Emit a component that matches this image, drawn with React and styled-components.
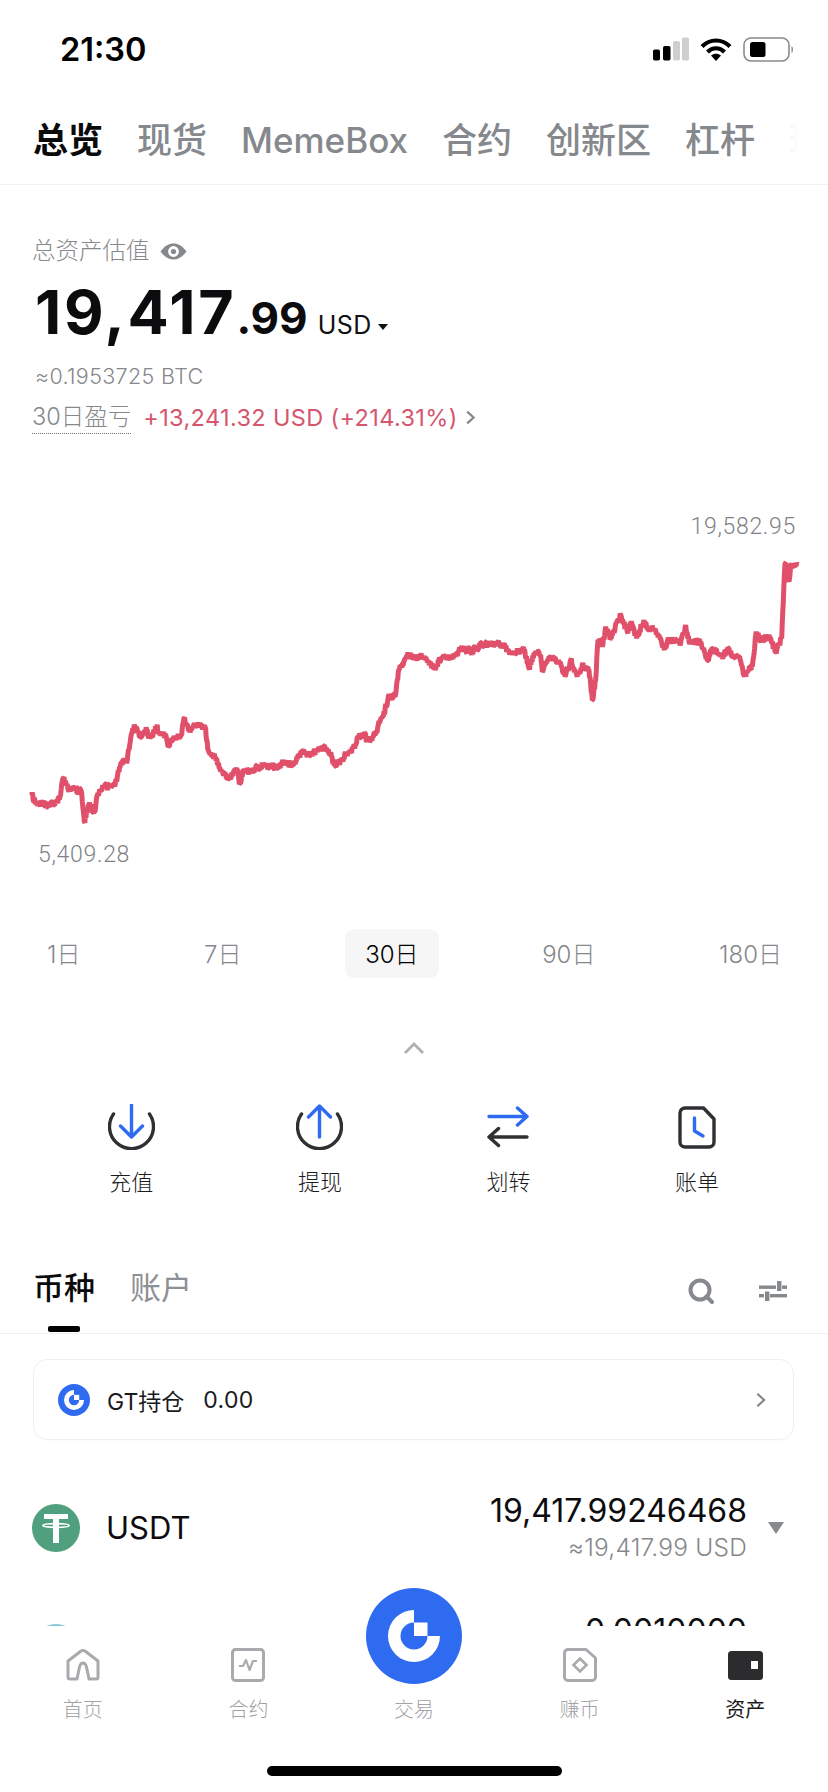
import React from 'react'
import styled, { createGlobalStyle } from 'styled-components'

const GlobalStyle = createGlobalStyle`
  html, body { margin: 0; padding: 0; background: #fff; }
  body { font-family: Inter, "Noto Sans CJK SC", sans-serif; color: #0d0d0f; }
`

const Page = styled.div`
  position: relative; width: 828px; height: 1792px; overflow: hidden; background: #fff;
`
const StatusBar = styled.div`
  height: 98px; display: flex; align-items: center; justify-content: space-between; padding: 0 34px 0 60px; box-sizing: border-box;
`
const Time = styled.span` padding-top: 2px; font: 600 32.5px/1 Inter, sans-serif; color: #000; `
const StatusIcons = styled.div` display: flex; align-items: center; gap: 11px; `

const TopTabs = styled.nav`
  position: relative; height: 87px; box-sizing: border-box; padding: 0 0 3px 33px; display: flex; align-items: center; gap: 34px; overflow: hidden; border-bottom: 1px solid #f2f2f3;
  &::after { content: ''; position: absolute; top: 0; right: 0; bottom: 0; width: 50px; background: linear-gradient(90deg, rgba(255,255,255,.75), #fff 40%); }
`
const TopTab = styled.span`
  flex: none; font-size: 35px; line-height: 44px; font-weight: ${({ $on }) => ($on ? 700 : 500)}; color: ${({ $on }) => ($on ? '#0a0a0a' : '#85888c')};
`

const Summary = styled.section` padding: 50px 32px 0; `
const Label = styled.div` display: flex; align-items: center; gap: 10px; font-size: 23.5px; line-height: 32px; font-weight: 300; color: #85888c; `
const Amount = styled.div` margin-top: 10px; display: flex; align-items: baseline; height: 70px; line-height: 70px; padding-left: 3px; `
const AmountBig = styled.span` font-size: 61px; font-weight: 700; letter-spacing: 2.7px; color: #0c0c0e; `
const AmountCents = styled.span` font-size: 44px; font-weight: 700; color: #0c0c0e; `
const Unit = styled.span` margin-left: 10px; font-size: 25px; font-weight: 400; color: #111; letter-spacing: .4px; `
const Caret = styled.i`
  margin-left: 6px; width: 0; height: 0; border: 5.5px solid transparent; border-top: 6.5px solid #111; border-bottom: 0; transform: translateY(-4px);
`
const Btc = styled.div` margin-top: 14px; padding-left: 3px; font-size: 21.5px; line-height: 30px; font-weight: 300; color: #85888c; letter-spacing: .35px; `
const Pnl = styled.div` margin-top: 10px; display: flex; align-items: center; line-height: 32px; `
const PnlLabel = styled.span` font-weight: 300; color: #85888c; border-bottom: 1.5px dotted #70747a; height: 32px; font-size: 23.5px; `
const PnlValue = styled.span` margin-left: 12px; color: #d5566f; font-weight: 400; letter-spacing: .36px; font-size: 23.5px; `
const PnlMore = styled.svg` margin-left: 7px; `

const ChartWrap = styled.section` margin-top: 78px; `
const HighLabel = styled.div` padding-right: 32px; text-align: right; font: 300 23px/30px Roboto, sans-serif; color: #7f8287; letter-spacing: .7px; `
const ChartSvg = styled.svg` display: block; width: 828px; height: 298px; `
const LowLabel = styled.div` padding-left: 38px; font: 300 23px/30px Roboto, sans-serif; color: #7f8287; letter-spacing: .7px; `

const Periods = styled.div` margin-top: 59px; padding: 0 26px 0 27px; display: flex; justify-content: space-between; `
const Period = styled.span`
  height: 49px; padding: 0 20px 2px; box-sizing: border-box; display: flex; align-items: center; border-radius: 9px; font-size: 24px; font-weight: 300;
  color: ${({ $on }) => ($on ? '#000' : '#85888c')}; background: ${({ $on }) => ($on ? '#f6f6f7' : 'transparent')};
`
const Collapse = styled.div` margin-top: 64px; height: 11px; display: flex; justify-content: center; `

const Actions = styled.div` margin-top: 51px; padding-left: 37px; display: grid; grid-template-columns: repeat(4, 188.6px); `
const Action = styled.div` display: flex; flex-direction: column; align-items: center; `
const ActionIcon = styled.div` height: 46px; display: flex; align-items: center; justify-content: center; `
const ActionText = styled.span` margin-top: 17px; margin-bottom: 1px; font-size: 22px; line-height: 30px; font-weight: 300; color: #1b1b1d; `

const ListHead = styled.div`
  position: relative; margin-top: 52px; height: 84px; box-sizing: border-box; padding: 20px 41px 0 33px; display: flex; align-items: flex-start; border-bottom: 1px solid #efeff0;
`
const ListTab = styled.span`
  font-size: 31px; line-height: 36px; margin-right: 35px; font-weight: ${({ $on }) => ($on ? 500 : 400)}; color: ${({ $on }) => ($on ? '#0a0a0a' : '#8d9095')};
`
const ListBar = styled.i` position: absolute; left: 48px; bottom: 1px; width: 32px; height: 6px; border-radius: 2px; background: #000; `
const ListTools = styled.div` margin-left: auto; margin-top: 8px; display: flex; align-items: center; gap: 45px; `

const GtCard = styled.div`
  margin: 25px 34px 0 33px; height: 81px; box-sizing: border-box; padding: 0 26px 0 24px; display: flex; align-items: center; border: 1px solid #f0f0f1; border-radius: 14px; box-shadow: 0 1px 3px rgba(0,0,0,.02);
`
const GtText = styled.span` margin-left: 17px; font-size: 23px; font-weight: 400; color: #1a1a1c; `
const GtValue = styled.span` margin-left: 19px; font-size: 23px; font-weight: 400; color: #1a1a1c; letter-spacing: .3px; `
const GtMore = styled.svg` margin-left: auto; `

const CoinRow = styled.div` margin-top: ${({ $gap }) => $gap}px; padding: 0 44px 0 32px; display: flex; align-items: center; `
const CoinBadge = styled.span`
  width: ${({ $size }) => $size}px; height: ${({ $size }) => $size}px; flex: none; border-radius: 50%; background: ${({ $color }) => $color}; display: flex; align-items: center; justify-content: center;
`
const CoinName = styled.span` margin-left: 26px; font-size: 31px; font-weight: 400; color: #0d0d0f; `
const CoinAmounts = styled.div` margin-left: auto; text-align: right; `
const CoinValue = styled.div` font-size: 32px; line-height: 36px; font-weight: 400; color: #0d0d0f; `
const CoinFiat = styled.div` margin-top: 3px; font-size: 24.5px; line-height: 30px; font-weight: 300; color: #85888c; letter-spacing: .2px; `
const CoinCaret = styled.i`
  margin-left: 21px; width: 0; height: 0; border: 8px solid transparent; border-top: 12px solid #85888c; border-bottom: 0;
`

const TabBar = styled.footer`
  position: absolute; left: 0; right: 0; bottom: 0; height: 166px; background: #fff; display: flex; flex-direction: column; align-items: center;
`
const TabRow = styled.div` width: 100%; padding-top: 22px; display: grid; grid-template-columns: repeat(5, 1fr); `
const TabItem = styled.div` display: flex; flex-direction: column; align-items: center; `
const TabIcon = styled.div` height: 34px; display: flex; align-items: center; justify-content: center; `
const TabText = styled.span`
  margin-top: 14px; font-size: 20px; line-height: 28px; font-weight: ${({ $on }) => ($on ? 400 : 300)}; color: ${({ $on }) => ($on ? '#1a1a1c' : '#a1a3a7')};
`
const TradeButton = styled.div`
  position: absolute; left: 366px; top: -38px; width: 96px; height: 96px; border-radius: 50%; background: #2f6bf0; display: flex; align-items: center; justify-content: center;
`
const HomeBar = styled.i` margin-top: 42px; width: 295px; height: 10px; border-radius: 5px; background: #000; `

// traced from the reference: [x, y] page pixels
const trace = [
  [95,885],[105,905],[120,912],[130,908],[140,922],[155,905],[170,910],[180,890],[190,835],[205,870],[225,865],[245,878],[253,965],[265,915],[285,935],[290,890],[310,860],[330,862],[350,845],[355,810],[370,780],[380,790],[395,700],[405,680],[420,710],[440,690],[450,715],[470,680],[480,705],[495,705],[505,740],[520,712],[545,705],[552,655],[565,690],[590,675],[615,682],[625,750],[650,775],[665,815],[690,835],[710,805],[720,850],[730,810],[750,815],[790,795],[810,800],[830,802],[855,785],[880,795],[905,755],[920,765],[970,745],[985,748],[1005,795],[1020,790],[1040,760],[1060,745],[1075,710],[1095,700],[1100,725],[1125,705],[1135,675],[1150,650],[1165,590],[1185,590],[1195,515],[1220,465],
].map(([x, y]) => [x / 3, 500 + y / 3]).concat([
  [0,470],[30,468],[60,505],[85,470],[115,475],[140,445],[175,455],[195,437],[255,428],[285,455],[330,450],[345,505],[360,460],[380,465],[385,515],[405,470],[435,485],[455,525],[470,480],[490,530],[505,495],[525,510],[535,600],[545,540],[552,420],[565,440],[575,380],[590,415],[620,345],[640,395],[650,370],[668,415],[690,360],[700,385],[720,385],[750,445],[765,420],[800,430],[815,375],[825,425],[860,425],[880,480],[895,445],[925,470],[945,445],[960,470],[975,470],[990,525],[1015,500],[1027,395],[1040,425],[1065,405],[1085,455],[1103,415],[1113,190],[1125,245],[1130,195],[1150,192],
].map(([x, y]) => [414 + x / 3, 500 + y / 3]))

// seeded jitter: the dense zigzag fills out into the noisy band of tick data
function chartPath() {
  let seed = 17
  const rand = () => { seed = (seed * 16807) % 2147483647; return seed / 2147483647 - 0.5 }
  let d = `M${trace[0][0]} ${trace[0][1]}`
  for (let i = 1; i < trace.length; i++) {
    const [x0, y0] = trace[i - 1]
    const [x1, y1] = trace[i]
    const steps = Math.max(1, Math.round((x1 - x0) / 0.6))
    for (let s = 1; s <= steps; s++) {
      const t = s / steps
      const amp = s === steps ? 0 : 7
      d += `L${(x0 + (x1 - x0) * t).toFixed(1)} ${(y0 + (y1 - y0) * t + rand() * amp).toFixed(1)}`
    }
  }
  return d
}

const GateMark = ({ size }) => (
  <svg width={size} height={size} viewBox="0 0 52 52">
    <path d="M26 0A26 26 0 1 0 52 26H39.5A13.5 13.5 0 1 1 26 12.5Z" fill="#fff" />
    <rect x="26" y="12.5" width="13.5" height="13.5" fill="#fff" />
  </svg>
)

const Signal = () => (
  <svg width="36" height="24" viewBox="0 0 36 24">
    <rect x="0" y="12.5" width="7" height="11" rx="1.8" fill="#000" />
    <rect x="10" y="9" width="7.5" height="14.5" rx="1.8" fill="#000" />
    <rect x="20" y="4" width="7" height="19.5" rx="1.8" fill="#cfcfcf" />
    <rect x="29" y="0.5" width="7" height="23" rx="1.8" fill="#cfcfcf" />
  </svg>
)

const Wifi = () => (
  <svg width="32" height="24" viewBox="0 0 32 24">
    <path d="M2 9.5C10 1.5 22 1.5 30 9.5" fill="none" stroke="#000" strokeWidth="4.2" />
    <path d="M7.5 15C12.5 10 19.5 10 24.5 15" fill="none" stroke="#000" strokeWidth="4.2" />
    <path d="M11 18.6C14 16 18 16 21 18.6L16 24Z" fill="#000" />
  </svg>
)

const Battery = () => (
  <svg width="51" height="25" viewBox="0 0 51 25">
    <rect x="1" y="1" width="45" height="23" rx="7" fill="#fff" stroke="#8a8a8a" strokeWidth="1.6" />
    <rect x="7" y="5" width="15.5" height="15" rx="2.5" fill="#000" />
    <path d="M48.5 9C50.5 10 50.5 15 48.5 16Z" fill="#8a8a8a" />
  </svg>
)

const Eye = () => (
  <svg width="27" height="17" viewBox="0 0 27 17">
    <path d="M0.5 8.5C5 2.5 9 0.5 13.5 0.5S22 2.5 26.5 8.5C22 14.5 18 16.5 13.5 16.5S5 14.5 0.5 8.5Z" fill="#85888c" />
    <circle cx="13.5" cy="8.5" r="5.4" fill="#fff" />
    <circle cx="13.5" cy="8.5" r="2.6" fill="#85888c" />
  </svg>
)

const Chevron = ({ size = 14, color = '#85888c', width = 2.2, className }) => (
  <svg className={className} width={size * 0.72} height={size} viewBox="0 0 10 14">
    <path d="M2 1.5L8 7L2 12.5" fill="none" stroke={color} strokeWidth={width} />
  </svg>
)

const Deposit = () => (
  <svg width="47" height="46" viewBox="0 0 47 46" fill="none" strokeLinecap="round" strokeLinejoin="round" strokeWidth="3.4">
    <path d="M5.5 10A22 22 0 1 0 41.5 10" stroke="#2f3033" />
    <path d="M23.5 1V33M12.5 22L23.5 33L34.5 22" stroke="#2f6bf0" />
  </svg>
)

const Withdraw = () => (
  <svg width="47" height="46" viewBox="0 0 47 46" fill="none" strokeLinecap="round" strokeLinejoin="round" strokeWidth="3.4">
    <path d="M5.5 10A22 22 0 1 0 41.5 10" stroke="#2f3033" />
    <path d="M23.5 33V2M12.5 13L23.5 2L34.5 13" stroke="#2f6bf0" />
  </svg>
)

const Transfer = () => (
  <svg width="42" height="42" viewBox="0 0 42 42" fill="none" strokeLinecap="round" strokeLinejoin="round" strokeWidth="3.4">
    <path d="M2 10.5H40M30.5 2L40 10.5L30.5 19" stroke="#2f6bf0" />
    <path d="M40 31H2M11.5 22.5L2 31L11.5 39.5" stroke="#2f3033" />
  </svg>
)

const Bill = () => (
  <svg width="38" height="43" viewBox="0 0 38 43" fill="none" strokeLinecap="round" strokeLinejoin="round" strokeWidth="3.4">
    <path d="M7 2H25.5L36 13V36A5 5 0 0 1 31 41H7A5 5 0 0 1 2 36V7A5 5 0 0 1 7 2Z" stroke="#2f3033" />
    <path d="M16.5 12V25L25 30" stroke="#2f6bf0" />
  </svg>
)

const Search = () => (
  <svg width="26" height="26" viewBox="0 0 26 26" fill="none" stroke="#85888c" strokeWidth="4">
    <circle cx="12" cy="12" r="9.5" />
    <path d="M18.5 18.5L24 24" strokeLinecap="round" />
  </svg>
)

const Sliders = () => (
  <svg width="28" height="20" viewBox="0 0 28 20" fill="#85888c">
    <rect x="0" y="4.5" width="17" height="3.4" />
    <rect x="18" y="0" width="4.4" height="10" />
    <rect x="23" y="4.5" width="5" height="3.4" />
    <rect x="0" y="13" width="5" height="3.4" />
    <rect x="6" y="10.500" width="4.4" height="9.5" />
    <rect x="11" y="13" width="17" height="3.4" />
  </svg>
)

const Tether = () => (
  <svg width="30" height="34" viewBox="0 0 30 34" fill="#fff">
    <rect x="3" y="3" width="24" height="5" />
    <rect x="12" y="3" width="6" height="29" />
    <path d="M2 14.5C2 12 28 12 28 14.5S2 17 2 14.5Z" fill="none" stroke="#fff" strokeWidth="1.8" />
  </svg>
)

const HomeIcon = () => (
  <svg width="34" height="32" viewBox="0 0 34 32" fill="none" stroke="#a8aaad" strokeWidth="3" strokeLinejoin="round">
    <path d="M2 12L15 2Q17 1 19 2L32 12V28Q32 30 30 30H23L20.500 18Q19.500 14 17 14T13.500 18L11 30H4Q2 30 2 28Z" />
  </svg>
)

const FuturesIcon = () => (
  <svg width="34" height="34" viewBox="0 0 34 34" fill="none" stroke="#a8aaad">
    <rect x="1.5" y="1.5" width="31" height="31" rx="3" strokeWidth="3" />
    <path d="M8 18L12 18L15 12L18.500 22L22 13L26 13" strokeWidth="2.2" strokeLinejoin="round" />
  </svg>
)

const EarnIcon = () => (
  <svg width="34" height="34" viewBox="0 0 34 34" fill="none" stroke="#a8aaad" strokeWidth="3">
    <path d="M5 1.500H23L32.500 10V29A3.500 3.500 0 0 1 29 32.500H5A3.500 3.500 0 0 1 1.500 29V5A3.500 3.500 0 0 1 5 1.500Z" strokeLinejoin="round" />
    <path d="M17 10.500L23.500 17L17 23.500L10.500 17Z" strokeWidth="2.600" />
  </svg>
)

const WalletIcon = () => (
  <svg width="35" height="29" viewBox="0 0 35 29">
    <rect x="0" y="0" width="35" height="29" rx="3.500" fill="#2c2c2f" />
    <rect x="23" y="10" width="7" height="8" fill="#fff" />
  </svg>
)

const topTabs = ['总览', '现货', 'MemeBox', '合约', '创新区', '杠杆', '理财']
const periods = ['1日', '7日', '30日', '90日', '180日']
const actions = [
  ['充值', Deposit],
  ['提现', Withdraw],
  ['划转', Transfer],
  ['账单', Bill],
]
const tabs = [
  ['首页', HomeIcon],
  ['合约', FuturesIcon],
  ['交易', null],
  ['赚币', EarnIcon],
  ['资产', WalletIcon],
]

export default function App() {
  return (
    <Page>
      <GlobalStyle />
      <StatusBar>
        <Time>21:30</Time>
        <StatusIcons>
          <Signal />
          <Wifi />
          <Battery />
        </StatusIcons>
      </StatusBar>

      <TopTabs>
        {topTabs.map((t, i) => <TopTab key={t} $on={i === 0}>{t}</TopTab>)}
      </TopTabs>

      <Summary>
        <Label>总资产估值 <Eye /></Label>
        <Amount>
          <AmountBig>19,417</AmountBig>
          <AmountCents>.99</AmountCents>
          <Unit>USD</Unit>
          <Caret />
        </Amount>
        <Btc>≈0.1953725 BTC</Btc>
        <Pnl>
          <PnlLabel>30日盈亏</PnlLabel>
          <PnlValue>+13,241.32 USD (+214.31%)</PnlValue>
          <PnlMore as={Chevron} size={15} />
        </Pnl>
      </Summary>

      <ChartWrap>
        <HighLabel>19,582.95</HighLabel>
        <ChartSvg viewBox="0 542 828 298">
          <path d={chartPath()} fill="none" stroke="#e0506a" strokeWidth="5" strokeLinejoin="bevel" />
        </ChartSvg>
        <LowLabel>5,409.28</LowLabel>
      </ChartWrap>

      <Periods>
        {periods.map((p) => <Period key={p} $on={p === '30日'}>{p}</Period>)}
      </Periods>

      <Collapse>
        <svg width="22" height="12" viewBox="0 0 22 12">
          <path d="M2 11L11 2L20 11" fill="none" stroke="#adafb2" strokeWidth="2.800" />
        </svg>
      </Collapse>

      <Actions>
        {actions.map(([label, Icon]) => (
          <Action key={label}>
            <ActionIcon><Icon /></ActionIcon>
            <ActionText>{label}</ActionText>
          </Action>
        ))}
      </Actions>

      <ListHead>
        <ListTab $on>币种</ListTab>
        <ListTab>账户</ListTab>
        <ListBar />
        <ListTools>
          <Search />
          <Sliders />
        </ListTools>
      </ListHead>

      <GtCard>
        <CoinBadge $color="#2f6bf0" $size={32}>
          <GateMark size={20} />
        </CoinBadge>
        <GtText>GT持仓</GtText>
        <GtValue>0.00</GtValue>
        <GtMore as={Chevron} size={16} color="#7f8287" width={1.800} />
      </GtCard>

      <CoinRow $gap={53}>
        <CoinBadge $color="#50a080" $size={48}><Tether /></CoinBadge>
        <CoinName>USDT</CoinName>
        <CoinAmounts>
          <CoinValue>19,417.99246468</CoinValue>
          <CoinFiat>≈19,417.99 USD</CoinFiat>
        </CoinAmounts>
        <CoinCaret />
      </CoinRow>

      <CoinRow $gap={51}>
        <CoinBadge $color="#86c8da" $size={48} />
        <CoinName>BTC</CoinName>
        <CoinAmounts>
          <CoinValue>0.0010000</CoinValue>
          <CoinFiat>≈100.00 USD</CoinFiat>
        </CoinAmounts>
        <CoinCaret />
      </CoinRow>

      <TabBar>
        <TradeButton><GateMark size={52} /></TradeButton>
        <TabRow>
          {tabs.map(([label, Icon]) => (
            <TabItem key={label}>
              <TabIcon>{Icon && <Icon />}</TabIcon>
              <TabText $on={label === '资产'}>{label}</TabText>
            </TabItem>
          ))}
        </TabRow>
        <HomeBar />
      </TabBar>
    </Page>
  )
}
